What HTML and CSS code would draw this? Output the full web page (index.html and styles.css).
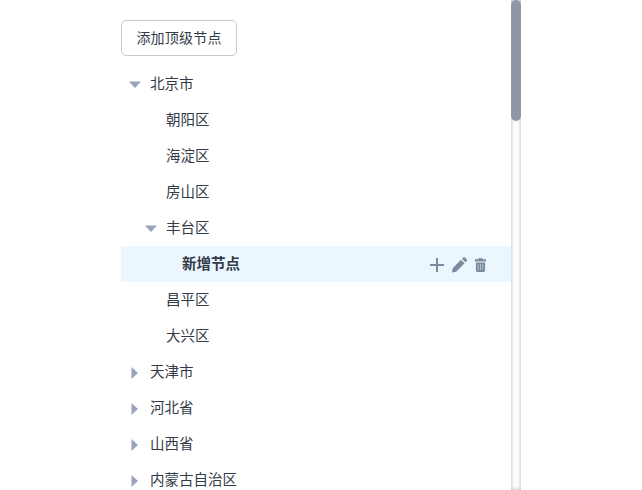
FILE: index.html
```html
<!DOCTYPE html>
<html lang="zh-CN">
<head>
<meta charset="utf-8">
<title>树形控件</title>
<link rel="stylesheet" href="styles.css">
</head>
<body>
<div class="panel">
  <div class="content">
    <button class="add-btn" type="button"><span class="btn-text">添加顶级节点</span></button>
    <ul class="tree">
      <li class="row"><svg class="caret" viewBox="0 0 12 12"><path d="M0 2.500h12L6 9z"/></svg><span class="label">北京市</span></li>
      <li class="row lv1"><span class="spacer"></span><span class="label">朝阳区</span></li>
      <li class="row lv1"><span class="spacer"></span><span class="label">海淀区</span></li>
      <li class="row lv1"><span class="spacer"></span><span class="label">房山区</span></li>
      <li class="row lv1"><svg class="caret" viewBox="0 0 12 12"><path d="M0 2.500h12L6 9z"/></svg><span class="label">丰台区</span></li>
      <li class="row lv2 active"><span class="spacer"></span><span class="label bold">新增节点</span>
        <span class="actions">
          <svg class="act plus" viewBox="0 0 14 14"><path d="M0 6h6V0h2v6h6v2H8v6H6V8H0z"/></svg>
          <svg class="act pencil" viewBox="0 0 15 16"><path d="M0 15.500l.7-4.300 8.300-8.400 3.500 3.500-8.300 8.400zM10 1.800l1.200-1.200a1.300 1.300 0 0 1 1.800 0l1.700 1.700a1.300 1.300 0 0 1 0 1.800l-1.200 1.200z"/></svg>
          <svg class="act trash" viewBox="0 0 12 16"><path d="M0 1.700h3.700V0.500h4.600v1.200H12v2.600H0zM1 5.300h10v8.700a1.500 1.500 0 0 1-1.500 1.500h-7A1.500 1.500 0 0 1 1 14z"/><path class="slot" d="M3 7h1.100v6.500H3zM5.450 7h1.100v6.500h-1.100zM7.900 7H9v6.500H7.900z"/></svg>
        </span>
      </li>
      <li class="row lv1"><span class="spacer"></span><span class="label">昌平区</span></li>
      <li class="row lv1"><span class="spacer"></span><span class="label">大兴区</span></li>
      <li class="row"><svg class="caret" viewBox="0 0 12 12"><path d="M2.500 0v12L9 6z"/></svg><span class="label">天津市</span></li>
      <li class="row"><svg class="caret" viewBox="0 0 12 12"><path d="M2.500 0v12L9 6z"/></svg><span class="label">河北省</span></li>
      <li class="row"><svg class="caret" viewBox="0 0 12 12"><path d="M2.500 0v12L9 6z"/></svg><span class="label">山西省</span></li>
      <li class="row"><svg class="caret" viewBox="0 0 12 12"><path d="M2.500 0v12L9 6z"/></svg><span class="label">内蒙古自治区</span></li>
    </ul>
  </div>
  <div class="scrollbar"><div class="thumb"></div></div>
</div>
</body>
</html>
```
FILE: styles.css
```css
* { box-sizing: border-box; }
html, body { margin: 0; padding: 0; height: 100%; overflow: hidden; background: #fff; }
body {
  font-family: "Noto Sans CJK SC", "Liberation Sans", sans-serif;
  font-size: 14px;
  color: #333b48;
  display: flex;
  justify-content: center;
}
.panel {
  display: flex;
  width: 400px;
  height: 490px;
}
.content { width: 390px; padding-top: 20px; }
.scrollbar {
  width: 10px;
  height: 490px;
  background: #fff;
  box-shadow: inset 0 0 4px rgba(0, 0, 0, 0.3);
}
.thumb { height: 121px; background: #8f97a6; border-radius: 5px; }
.add-btn {
  display: block;
  width: 116px;
  height: 36px;
  padding: 0 0 2px;
  border: 1px solid #c9cbcf;
  border-radius: 5px;
  background: #fff;
  color: #333b48;
  font: inherit;
}
.btn-text { letter-spacing: 0.2px; }
.tree { list-style: none; margin: 10px 0 0; padding: 0; }
.row {
  display: flex;
  align-items: center;
  height: 36px;
}
.lv1 { padding-left: 16px; }
.lv2 { padding-left: 32px; }
.label { font-size: 14.5px; padding-bottom: 3px; }
.bold { font-weight: 700; }
.caret { width: 12px; height: 12px; margin: 2px 9px 0 8px; fill: #98a4ba; flex: none; }
.spacer { width: 29px; flex: none; }
.active { background: #ebf6fe; }
.actions { margin: 1px 25px 0 auto; display: flex; align-items: center; gap: 8px; }
.act { height: 16px; fill: #7d899c; flex: none; }
.plus { width: 14px; height: 14px; }
.pencil { width: 15px; }
.trash { width: 11px; }
.slot { fill: #a9c4c8; }
```
